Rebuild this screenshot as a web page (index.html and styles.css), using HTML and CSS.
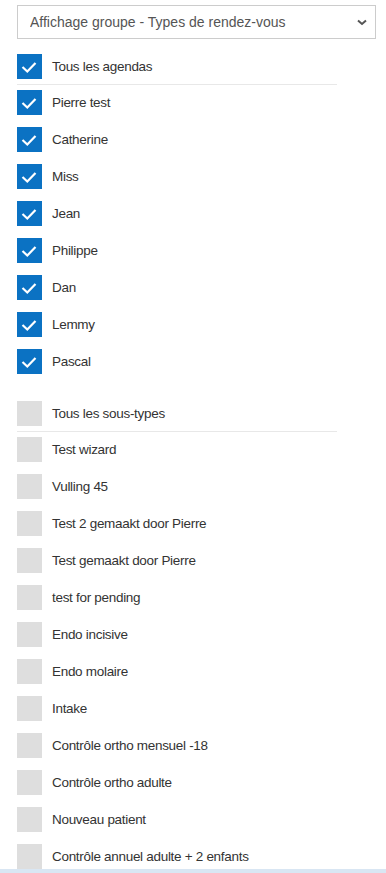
FILE: index.html
```html
<!DOCTYPE html>
<html lang="fr">
<head>
    <meta charset="UTF-8">
    <meta name="viewport" content="width=device-width, initial-scale=1.0">
    <title>Agendas</title>
    <link rel="stylesheet" href="styles.css">
</head>
<body>
    <div class="panel">
        <div class="select-wrap">
            <select class="view-select">
                <option>Affichage groupe - Types de rendez-vous</option>
            </select>
            <svg class="chevron" width="10" height="7" viewBox="0 0 10 7"><path d="M1 1.5 L5 5 L9 1.5" fill="none" stroke="#555" stroke-width="2"/></svg>
        </div>

        <!-- Agendas -->
        <div class="group">
            <div class="row"><span class="box on"><svg viewBox="0 0 25 25"><path d="M5.5 13 L10.3 17.5 L18.5 9" /></svg></span><span class="label">Tous les agendas</span></div>
            <div class="sep"></div>
            <div class="row"><span class="box on"><svg viewBox="0 0 25 25"><path d="M5.5 13 L10.3 17.5 L18.5 9" /></svg></span><span class="label">Pierre test</span></div>
            <div class="row"><span class="box on"><svg viewBox="0 0 25 25"><path d="M5.5 13 L10.3 17.5 L18.5 9" /></svg></span><span class="label">Catherine</span></div>
            <div class="row"><span class="box on"><svg viewBox="0 0 25 25"><path d="M5.5 13 L10.3 17.5 L18.5 9" /></svg></span><span class="label">Miss</span></div>
            <div class="row"><span class="box on"><svg viewBox="0 0 25 25"><path d="M5.5 13 L10.3 17.5 L18.5 9" /></svg></span><span class="label">Jean</span></div>
            <div class="row"><span class="box on"><svg viewBox="0 0 25 25"><path d="M5.5 13 L10.3 17.5 L18.5 9" /></svg></span><span class="label">Philippe</span></div>
            <div class="row"><span class="box on"><svg viewBox="0 0 25 25"><path d="M5.5 13 L10.3 17.5 L18.5 9" /></svg></span><span class="label">Dan</span></div>
            <div class="row"><span class="box on"><svg viewBox="0 0 25 25"><path d="M5.5 13 L10.3 17.5 L18.5 9" /></svg></span><span class="label">Lemmy</span></div>
            <div class="row"><span class="box on"><svg viewBox="0 0 25 25"><path d="M5.5 13 L10.3 17.5 L18.5 9" /></svg></span><span class="label">Pascal</span></div>
        </div>

        <!-- Sous-types -->
        <div class="group">
            <div class="row"><span class="box"></span><span class="label">Tous les sous-types</span></div>
            <div class="sep"></div>
            <div class="row"><span class="box"></span><span class="label">Test wizard</span></div>
            <div class="row"><span class="box"></span><span class="label">Vulling 45</span></div>
            <div class="row"><span class="box"></span><span class="label">Test 2 gemaakt door Pierre</span></div>
            <div class="row"><span class="box"></span><span class="label">Test gemaakt door Pierre</span></div>
            <div class="row"><span class="box"></span><span class="label">test for pending</span></div>
            <div class="row"><span class="box"></span><span class="label">Endo incisive</span></div>
            <div class="row"><span class="box"></span><span class="label">Endo molaire</span></div>
            <div class="row"><span class="box"></span><span class="label">Intake</span></div>
            <div class="row"><span class="box"></span><span class="label">Contrôle ortho mensuel -18</span></div>
            <div class="row"><span class="box"></span><span class="label">Contrôle ortho adulte</span></div>
            <div class="row"><span class="box"></span><span class="label">Nouveau patient</span></div>
            <div class="row"><span class="box"></span><span class="label">Contrôle annuel adulte + 2 enfants</span></div>
        </div>
    </div>

    <div class="bottom-bar"></div>
</body>
</html>
```

FILE: styles.css
```css
body {
    margin: 0;
    font-family: "Liberation Sans", Arial, sans-serif;
    color: #333;
    background: #fff;
}

.panel {
    padding: 5px 10px 0 17px;
}

.select-wrap {
    position: relative;
    width: 359px;
}

.view-select {
    appearance: none;
    -webkit-appearance: none;
    display: block;
    width: 100%;
    height: 34px;
    margin: 0;
    padding: 0 24px 0 12px;
    border: 1px solid #ccc;
    border-radius: 0;
    background: #fff;
    font-family: "Liberation Sans", Arial, sans-serif;
    font-size: 14px;
    color: #555;
}

.chevron {
    position: absolute;
    right: 9px;
    top: 14px;
    pointer-events: none;
}

.group {
    margin-top: 15px;
}

.group + .group {
    margin-top: 27px;
}

.row {
    display: flex;
    align-items: center;
    height: 25px;
    margin-bottom: 12px;
}

.row:first-child {
    margin-bottom: 5px;
}

.sep {
    width: 320px;
    height: 1px;
    background: #e8e8e8;
    margin-bottom: 5px;
}

.box {
    width: 25px;
    height: 25px;
    flex: none;
    background: #dedede;
}

.box.on {
    background: #0b72c3;
}

.box svg {
    display: block;
    width: 25px;
    height: 25px;
}

.box svg path {
    fill: none;
    stroke: #fff;
    stroke-width: 2.2;
}

.label {
    margin-left: 10px;
    font-size: 13.5px;
    letter-spacing: -0.3px;
}

/* barre du bas, à peine visible */
.bottom-bar {
    position: fixed;
    left: 0;
    right: 0;
    bottom: 0;
    height: 4px;
    background: #d9e6f3;
}
```
